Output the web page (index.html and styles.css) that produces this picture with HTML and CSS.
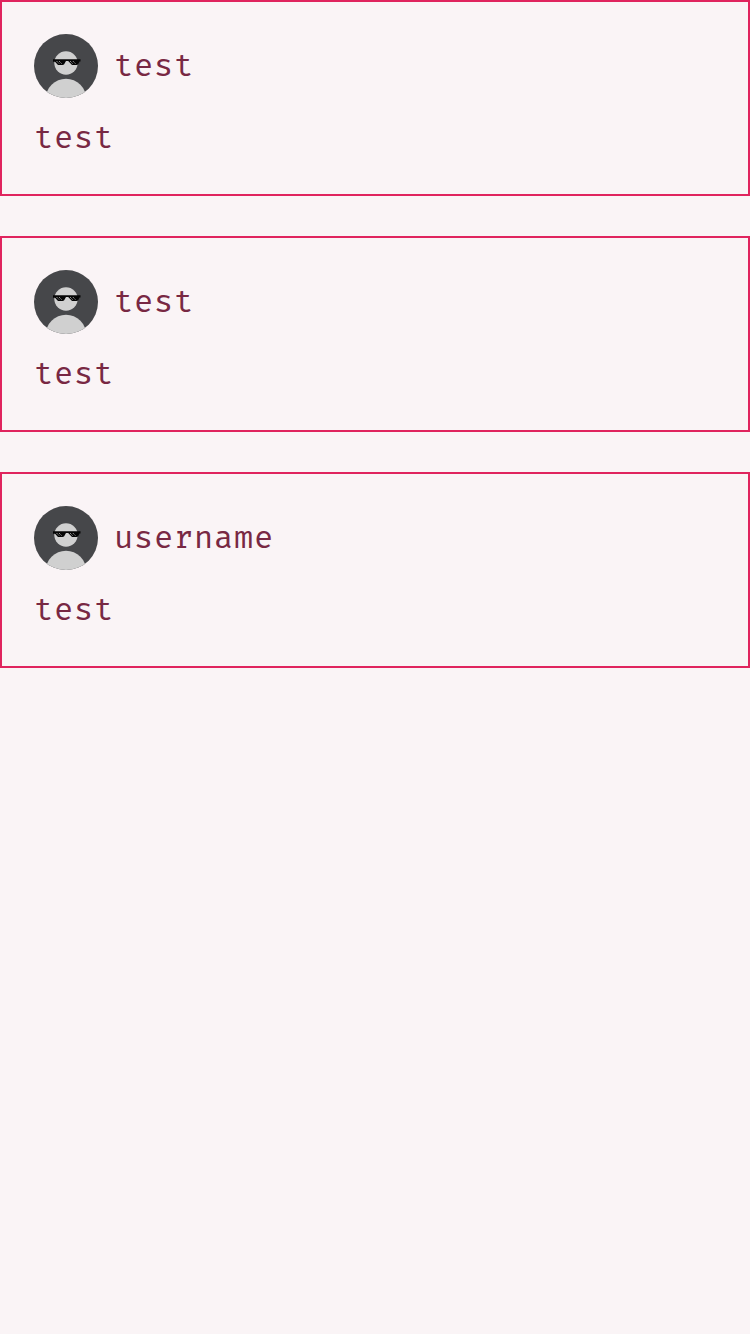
FILE: index.html
```html
<!DOCTYPE html>
<html lang="en">
<head>
<meta charset="utf-8">
<title>Posts</title>
<link rel="stylesheet" href="styles.css">
</head>
<body>
<svg width="0" height="0" class="defs">
  <symbol id="avatar" viewBox="0 0 64 64">
    <rect width="64" height="64" fill="#46474a"/>
    <circle cx="32" cy="29" r="11.7" fill="#d0d0d0"/>
    <circle cx="32" cy="65.2" r="20.4" fill="#d0d0d0"/>
    <path d="M19 25.3H46.5V27.5H45.5L44 30.4L42.5 31H38L34.2 27H32L30 30.4L28.5 31H24L21 27.8H19Z" fill="#050505"/>
    <path d="M22.5 27l3 3M25 27l3 3M36 27l3 3M38.8 27l3 3" fill="none" stroke="#a0a0a0" stroke-width=".9" stroke-dasharray="1.6 .5"/>
  </symbol>
</svg>
<main class="posts">
  <article class="post">
    <header class="author"><svg class="avatar"><use href="#avatar"/></svg><span class="name">test</span></header>
    <p class="message">test</p>
  </article>
  <article class="post">
    <header class="author"><svg class="avatar"><use href="#avatar"/></svg><span class="name">test</span></header>
    <p class="message">test</p>
  </article>
  <article class="post">
    <header class="author"><svg class="avatar"><use href="#avatar"/></svg><span class="name">username</span></header>
    <p class="message">test</p>
  </article>
</main>
</body>
</html>
```
FILE: styles.css
```css
body {
  margin: 0;
  min-height: 100vh;
  background: #faf4f6;
  color: #782843;
  font: 32px/40px "Fira Mono", "DejaVu Sans Mono", monospace;
  letter-spacing: 0.8px;
}
.defs { display: block; }
.posts { display: flex; flex-direction: column; gap: 40px; }
.post {
  box-sizing: border-box;
  height: 196px;
  padding: 32px;
  border: 2px solid #e0245e;
}
.author { display: flex; align-items: center; gap: 16px; }
.avatar { width: 64px; height: 64px; border-radius: 50%; }
.name { padding-bottom: 2px; }
.message { margin: 19px 0 0; }
```
